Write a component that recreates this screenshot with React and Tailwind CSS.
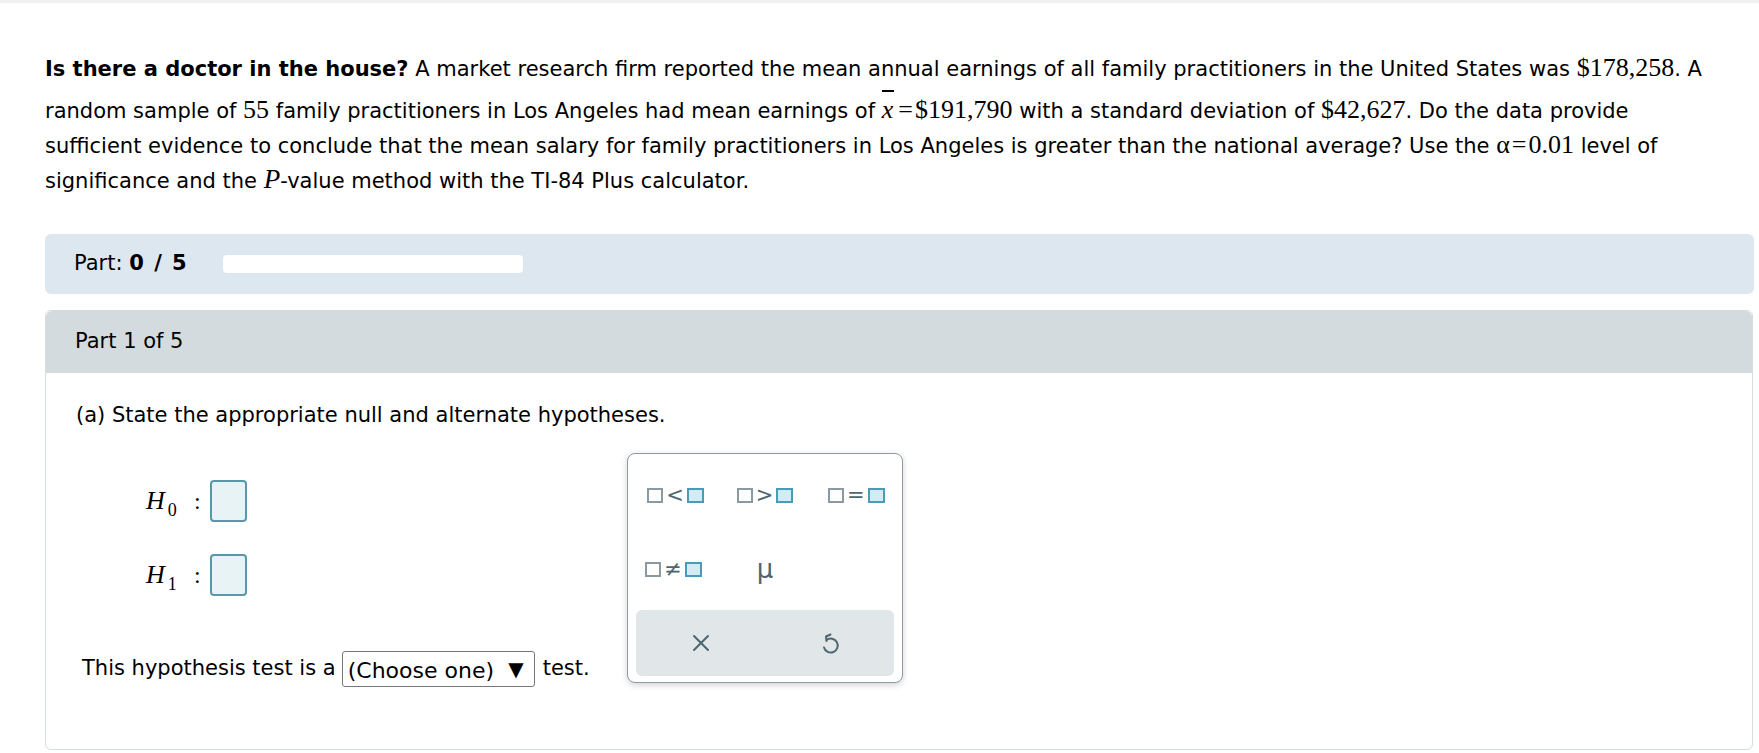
import React from "react";

const sans = { fontFamily: '"DejaVu Sans", Verdana, sans-serif' };

function GraySq() {
  return <span className="inline-block w-[16px] h-[15px] border-2 border-[#8a9aa2] bg-white" />;
}
function BlueSq() {
  return <span className="inline-block w-[17px] h-[15px] border-2 border-[#4a9bb5] bg-[#d3ecf3]" />;
}

function Op({ sym }) {
  return (
    <span className="flex items-center gap-[3px]">
      <GraySq />
      <span className="text-[21px] leading-none text-[#4d6670] font-['DejaVu_Sans']">{sym}</span>
      <BlueSq />
    </span>
  );
}

function Hyp({ sub }) {
  return (
    <div className="flex items-center h-[42px]">
      <span className="w-[48px] font-['Liberation_Serif'] italic text-[26px] leading-none">
        H<sub className="not-italic text-[18px] relative top-[7px] ml-[3px]">{sub}</sub>
      </span>
      <span className="w-[16px] font-['Liberation_Serif'] text-[24px]">:</span>
      <span className="w-[37px] h-[42px] rounded-[4px] border-2 border-[#5a97ab] bg-[#e8f3f6]" />
    </div>
  );
}

const M = "font-['Liberation_Serif'] text-[26px] leading-none";

export default function App() {
  return (
    <div className="w-[1759px] h-[753px] bg-white text-black overflow-hidden" style={sans}>
      <div className="h-[3px] bg-[#eef0f2]" />
      <div className="pl-[45px] pr-[5px]">
        <div className="pt-[49px] text-[21px] leading-[35px] whitespace-nowrap">
          <div>
            <b>Is there a doctor in the house?</b> A market research firm reported the mean annual earnings of all family practitioners in the United States was{" "}
            <span className={M}>$178,258</span>. A
          </div>
          <div className="mt-[7px]">
            random sample of <span className={M}>55</span> family practitioners in Los Angeles had mean earnings of{" "}
            <span className={M}>
              <span className="relative italic">
                x
                <span className="absolute left-[0px] right-[-1px] top-[-5px] h-[1.5px] bg-black" />
              </span>
              <span className="ml-[5px] mr-[2px]">=</span>$191,790
            </span>{" "}
            with a standard deviation of <span className={M}>$42,627</span>. Do the data provide
          </div>
          <div>
            sufficient evidence to conclude that the mean salary for family practitioners in Los Angeles is greater than the national average? Use the{" "}
            <span className={M}>
              α<span className="mx-[2px]">=</span>0.01
            </span>{" "}
            level of
          </div>
          <div>
            significance and the <span className="font-['Liberation_Serif'] italic text-[27px] leading-none">P</span>-value method with the TI-84 Plus calculator.
          </div>
        </div>

        <div className="mt-[35px] h-[60px] rounded-[6px] bg-[#dde7ef] flex items-center pl-[29px] text-[21px]">
          <span className="w-[149px]">
            Part: <b className="tracking-[1.5px]">0 / 5</b>
          </span>
          <span className="w-[300px] h-[18px] rounded-[4px] bg-white" />
        </div>

        <div className="mt-[16px] h-[440px] mr-[1px] rounded-[6px] border border-[#d5dcdf] relative">
          <div className="h-[62px] bg-[#d3dbdf] rounded-t-[6px] flex items-center pl-[29px] text-[21px]">Part 1 of 5</div>
          <div className="pl-[30px] text-[21px]">
            <div className="pt-[30px] leading-[24px]">(a) State the appropriate null and alternate hypotheses.</div>
            <div className="pl-[70px] pt-[53px] flex flex-col gap-[32px]">
              <Hyp sub="0" />
              <Hyp sub="1" />
            </div>
            <div className="pl-[6px] mt-[55px] flex items-center h-[36px]">
              <span>This hypothesis test is a</span>
              <span className="ml-[6px] w-[193px] h-[36px] border border-[#767676] rounded-[3px] flex items-center justify-between pl-[5px] pr-[10px] text-[22px]">
                <span className="pt-[3px]">(Choose one)</span>
                <span className="text-[20px]">▼</span>
              </span>
              <span className="ml-[8px]">test.</span>
            </div>
          </div>

          <div className="absolute left-[581px] top-[142px] w-[276px] h-[230px] rounded-[8px] border border-[#8a9ca4] bg-white shadow-[0_2px_6px_rgba(0,0,0,0.18)] flex flex-col">
            <div className="grid grid-cols-3 h-[82px] items-center">
              <div className="flex justify-center pl-[4px]"><Op sym="<" /></div>
              <div className="flex justify-center"><Op sym=">" /></div>
              <div className="flex justify-center"><Op sym="=" /></div>
            </div>
            <div className="grid grid-cols-3 h-[66px] items-center">
              <div className="flex justify-center"><Op sym="≠" /></div>
              <div className="flex justify-center text-[26px] text-[#4d6670] leading-none">μ</div>
              <div />
            </div>
            <div className="mt-[8px] mx-[8px] h-[66px] rounded-[6px] bg-[#e1e6e9] grid grid-cols-2 items-center">
              <div className="flex justify-center">
                <svg width="22" height="22" viewBox="0 0 22 22" fill="none" stroke="#4d6670" strokeWidth="2" strokeLinecap="round">
                  <path d="M4 4 L18 18 M18 4 L4 18" />
                </svg>
              </div>
              <div className="flex justify-center">
                <svg width="24" height="26" viewBox="0 0 24 26" fill="none" stroke="#4d6670" strokeWidth="2" strokeLinecap="round" strokeLinejoin="round">
                  <path d="M8.5 10 A7 7 0 1 1 6 17.5" />
                  <path d="M12.5 4.5 L8 6.5 L8.5 11" />
                </svg>
              </div>
            </div>
          </div>
        </div>
      </div>
    </div>
  );
}
